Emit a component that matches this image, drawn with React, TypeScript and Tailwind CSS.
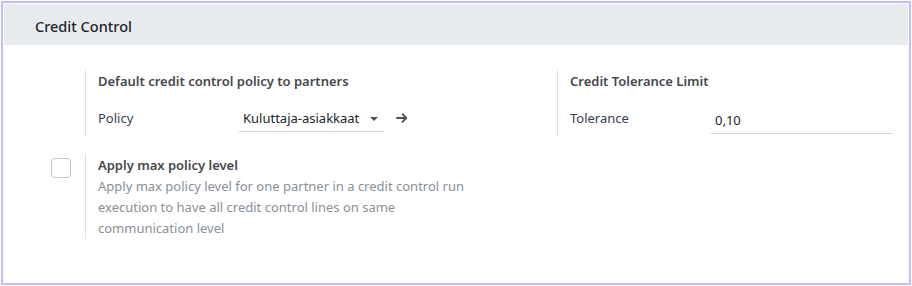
import { ReactNode } from "react"

const font = { fontFamily: '"Noto Sans", "Open Sans", sans-serif' }

const Pane = ({ children, className }: { children: ReactNode; className?: string }) => {
  return <div className={"border-l border-[#dee2e6] pl-3 " + (className ?? "")}>{children}</div>
}

const Heading = ({ children }: { children: ReactNode }) => {
  return <div className="text-[13px] leading-[21px] font-semibold text-[#45484c]">{children}</div>
}

export default function App() {
  return (
    <div className="w-[912px] h-[286px] bg-white p-px" style={font}>
      <div className="h-[284px] border-2 border-[#c5bdfb] bg-white p-px">
        <div className="h-[41px] bg-[#e9ecef] flex items-center pl-[31px] pt-[5px] text-[14.5px] font-medium text-[#212529]">
          Credit Control
        </div>

        <div className="flex pl-[81px] pt-[25px]">
          <Pane className="w-[472px] h-[67px] pt-px">
            <Heading>Default credit control policy to partners</Heading>
            <div className="flex items-start mt-[16px] text-[13px] text-[#374151]">
              <div className="w-[141px] leading-[21px]">Policy</div>
              <div className="w-[145px] h-[24px] border-b border-[#ced4da] flex items-start pl-1 pr-[6px]">
                <span className="leading-[21px] text-[#212529]">Kuluttaja-asiakkaat</span>
                <span className="ml-auto mt-[9px] w-0 h-0 border-l-[4px] border-r-[4px] border-t-[4px] border-l-transparent border-r-transparent border-t-[#495057]" />
              </div>
              <svg className="ml-[12px] mt-[4px]" width="12" height="12" viewBox="0 0 12 12">
                <path d="M1 6h9M6.5 2.2L10.3 6 6.5 9.8" stroke="#495057" strokeWidth="1.8" fill="none" strokeLinecap="round" strokeLinejoin="round" />
              </svg>
            </div>
          </Pane>
          <Pane className="flex-1 h-[67px] mr-[10px] pt-px">
            <Heading>Credit Tolerance Limit</Heading>
            <div className="flex items-start mt-[16px] text-[13px] text-[#374151]">
              <div className="w-[141px] leading-[21px]">Tolerance</div>
              <div className="w-[181px] h-[26px] border-b border-[#ced4da] pl-1 leading-[21px] pt-[2px] text-[#212529]">
                0,10
              </div>
            </div>
          </Pane>
        </div>

        <div className="flex pl-[47px] pt-[17px]">
          <div className="w-[34px] pt-[4px]">
            <div className="w-[20px] h-[20px] rounded-[4px] border border-[#c4c4c4] bg-white" />
          </div>
          <Pane className="w-[472px] pt-[1px]">
            <Heading>Apply max policy level</Heading>
            <div className="text-[13px] leading-[21px] text-[#8a8f96]">
              <div>Apply max policy level for one partner in a credit control run</div>
              <div>execution to have all credit control lines on same</div>
              <div>communication level</div>
            </div>
          </Pane>
        </div>
      </div>
    </div>
  )
}
